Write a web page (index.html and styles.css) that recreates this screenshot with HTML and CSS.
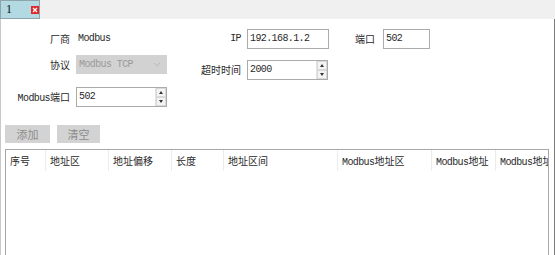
FILE: index.html
```html
<!DOCTYPE html>
<html lang="zh-CN">
<head>
    <meta charset="UTF-8">
    <title>Modbus</title>
    <link rel="stylesheet" href="styles.css">
</head>
<body>
    <div class="tabbar">
        <div class="tab">
            <span class="tab-title">1</span>
            <svg class="tab-close" width="8" height="8" viewBox="0 0 8 8">
                <rect x="0" y="0" width="8" height="8" fill="#e0262a"/>
                <path d="M2 2 L6 6 M6 2 L2 6" stroke="#fff" stroke-width="1.2"/>
            </svg>
        </div>
    </div>

    <div class="panel">
        <div class="form">
            <!-- row 1 -->
            <label class="lbl r1">厂商</label>
            <div class="value r1 lat">Modbus</div>
            <label class="lbl r1 lat">IP</label>
            <div class="input r1 lat">192.168.1.2</div>
            <label class="lbl r1 lbl-port">端口</label>
            <div class="input r1 input-port lat">502</div>

            <!-- row 2 -->
            <label class="lbl r2">协议</label>
            <div class="select r2">
                <span class="lat">Modbus TCP</span>
                <svg width="8" height="5" viewBox="0 0 8 5"><path d="M1 1 L4 4 L7 1" fill="none" stroke="#b8b8b8" stroke-width="1"/></svg>
            </div>
            <label class="lbl r2 lbl-low">超时时间</label>
            <div class="input spin r2 spin-low">
                <span class="lat">2000</span>
                <div class="spin-btns">
                    <div class="spin-btn"><i class="up"></i></div>
                    <div class="spin-btn"><i class="down"></i></div>
                </div>
            </div>

            <!-- row 3 -->
            <label class="lbl r3"><span class="lat">Modbus</span>端口</label>
            <div class="input spin r3">
                <span class="lat">502</span>
                <div class="spin-btns">
                    <div class="spin-btn"><i class="up"></i></div>
                    <div class="spin-btn"><i class="down"></i></div>
                </div>
            </div>
        </div>

        <div class="actions">
            <button class="btn btn-add">添加</button>
            <button class="btn btn-clear">清空</button>
        </div>

        <div class="grid">
            <div class="grid-head">
                <div class="col c1">序号</div>
                <div class="col c2">地址区</div>
                <div class="col c3">地址偏移</div>
                <div class="col c4">长度</div>
                <div class="col c5">地址区间</div>
                <div class="col c6"><span class="lat">Modbus</span>地址区</div>
                <div class="col c7"><span class="lat">Modbus</span>地址</div>
                <div class="col c8"><span class="lat">Modbus</span>地址</div>
            </div>
        </div>
    </div>
</body>
</html>
```

FILE: styles.css
```css
html, body {
    margin: 0;
    padding: 0;
    background: #fff;
    overflow: hidden;
}
body {
    width: 555px;
    height: 255px;
    font-family: "Noto Sans CJK SC", sans-serif;
    font-size: 10px;
    color: #2a2a2a;
}
.lat {
    font-family: "Liberation Mono", monospace;
    font-size: 10px;
    letter-spacing: -0.6px;
}
.tabbar {
    height: 19px;
    background: #f0f0f0;
    display: flex;
}
.tab {
    width: 40px;
    height: 19px;
    box-sizing: border-box;
    background: #b3d9e3;
    border: 1px solid #8ea4ab;
    display: flex;
    align-items: center;
    padding-left: 5px;
    gap: 19px;
}
.tab-title {
    font-family: "Liberation Serif", serif;
    font-size: 12px;
    color: #111;
}
.tab-close {
    display: block;
}
.panel {
    height: 236px;
    box-sizing: border-box;
    border-left: 1px solid #c8c8c8;
    border-right: 1px solid #7c7c7c;
    padding-top: 10px;
    overflow: hidden;
}
.form {
    display: grid;
    grid-template-columns: 69px 97px 74px 88px 49px 52px;
    grid-template-rows: 20px 26px 20px;
    row-gap: 6px;
    align-items: start;
}
.r1 { grid-row: 1; }
.r2 { grid-row: 2; }
.r3 { grid-row: 3; }
.lbl {
    height: 20px;
    line-height: 20px;
    text-align: right;
    white-space: nowrap;
}
.lbl-port {
    padding-right: 3px;
}
.lbl-low {
    margin-top: 5px;
}
.value {
    margin-left: 8px;
    height: 20px;
    line-height: 20px;
}
.input {
    margin-left: 6px;
    height: 20px;
    box-sizing: border-box;
    border: 1px solid #ababab;
    background: #fff;
    line-height: 17px;
    padding-left: 2px;
}
.r1.input { width: 82px; }
.input-port {
    margin-left: 5px;
    width: 47px !important;
}
.select {
    margin-left: 6px;
    width: 91px;
    height: 19px;
    box-sizing: border-box;
    background: #d2d2d2;
    color: #9a9a9a;
    display: flex;
    align-items: center;
    justify-content: space-between;
    padding: 0 6px 0 3px;
}
.select svg {
    display: block;
}
.spin {
    display: flex;
    justify-content: space-between;
    padding-right: 0;
}
.r2.spin { width: 81px; }
.r3.spin { width: 91px; }
.spin-low {
    margin-top: 5px;
}
.spin-btns {
    width: 10px;
    display: flex;
    flex-direction: column;
    border-left: 1px solid #e2e2e2;
}
.spin-btn {
    flex: 1;
    display: flex;
    align-items: center;
    justify-content: center;
    background: #f4f4f4;
    border: 1px solid #d8d8d8;
}
.spin-btn i {
    width: 0;
    height: 0;
    border-left: 2px solid transparent;
    border-right: 2px solid transparent;
}
.spin-btn .up { border-bottom: 3px solid #333; }
.spin-btn .down { border-top: 3px solid #333; }
.actions {
    display: flex;
    gap: 7px;
    margin-top: 18px;
    padding-left: 4px;
}
.btn {
    height: 18px;
    border: none;
    background: #d3d3d3;
    color: #8c8c8c;
    font-family: "Noto Sans CJK SC", sans-serif;
    font-size: 11px;
    padding: 0;
    line-height: 18px;
}
.btn-add { width: 45px; }
.btn-clear { width: 43px; }
.grid {
    margin: 6px 0 0 4px;
    width: 544px;
    height: 110px;
    box-sizing: border-box;
    border: 1px solid #a8a8a8;
    border-bottom: none;
    overflow: hidden;
}
.grid-head {
    display: flex;
    height: 21px;
}
.col {
    flex: none;
    height: 21px;
    line-height: 21px;
    padding-left: 4px;
    box-sizing: border-box;
    border-right: 1px solid #ececec;
    white-space: nowrap;
    overflow: hidden;
}
.c1 { width: 40px; }
.c2 { width: 63px; }
.c3 { width: 63px; }
.c4 { width: 52px; }
.c5 { width: 114px; }
.c6 { width: 94px; }
.c7 { width: 64px; }
.c8 { width: 80px; border-right: none; }
```
